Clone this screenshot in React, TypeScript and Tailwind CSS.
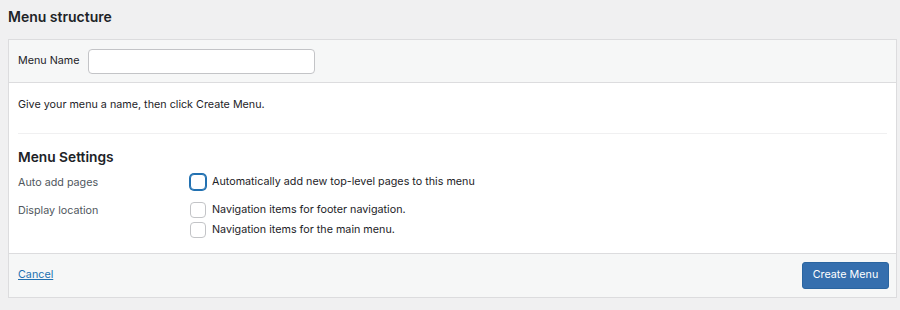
export default function App() {
  const rows: { label: string; options: { text: string; focused?: boolean }[] }[] = [
    {
      label: 'Auto add pages',
      options: [{ text: 'Automatically add new top-level pages to this menu', focused: true }],
    },
    {
      label: 'Display location',
      options: [
        { text: 'Navigation items for footer navigation.' },
        { text: 'Navigation items for the main menu.' },
      ],
    },
  ];

  return (
    <div
      className="h-[310px] w-[900px] bg-[#f0f0f1] pl-2 pr-[3px] text-[#1d2327]"
      style={{ fontFamily: 'Inter, "Noto Sans", sans-serif' }}
    >
      <h2 className="pt-[8px] text-[14px] leading-[18px] font-semibold">Menu structure</h2>

      <div className="mt-[13px] border border-[#dcdcde] bg-white">
        {/* name row */}
        <div className="flex h-[43px] items-center border-b border-[#dcdcde] bg-[#f6f7f7] pl-[9px]">
          <label className="w-[70px] text-[10.75px]">Menu Name</label>
          <input
            type="text"
            className="h-[25px] w-[227px] rounded-[4px] border border-[#c3c4c7] bg-white px-2 text-[10.75px] outline-none"
          />
        </div>

        <div className="px-[9px]">
          <p className="pt-[14px] pb-[20px] text-[10.75px] leading-[16px]">
            Give your menu a name, then click Create Menu.
          </p>
          <div className="h-px w-full bg-[#f0f0f1]" />

          <h3 className="pt-[14px] text-[13.75px] leading-[18px] font-semibold">Menu Settings</h3>

          <div className="mt-[8px] pb-[15px]">
            {rows.map((row, i) => (
              <div key={row.label} className={`flex ${i > 0 ? 'mt-[12px]' : ''}`}>
                <div className="w-[172px] pt-[1px] text-[10.75px] leading-[15px] text-[#50575e]">
                  {row.label}
                </div>
                <div className="flex flex-col gap-[4px]">
                  {row.options.map((opt) => (
                    <label key={opt.text} className="flex items-center gap-[6px] text-[10.75px] leading-[16px]">
                      <span
                        className={`h-[16px] w-[16px] rounded-[4px] border bg-white ${
                          opt.focused
                            ? 'border-[#2271b1] shadow-[0_0_0_1px_#2271b1]'
                            : 'border-[#c3c4c7]'
                        }`}
                      />
                      {opt.text}
                    </label>
                  ))}
                </div>
              </div>
            ))}
          </div>
        </div>

        {/* footer */}
        <div className="flex h-[44px] items-center justify-between border-t border-[#dcdcde] bg-[#f6f7f7] pl-[9px] pr-[7px]">
          <a href="#" className="text-[10.75px] text-[#2271b1] underline">
            Cancel
          </a>
          <button className="h-[27px] w-[87px] rounded-[3px] border border-[#2a65a0] bg-[#356fae] text-[10.75px] text-white">
            Create Menu
          </button>
        </div>
      </div>
    </div>
  );
}
